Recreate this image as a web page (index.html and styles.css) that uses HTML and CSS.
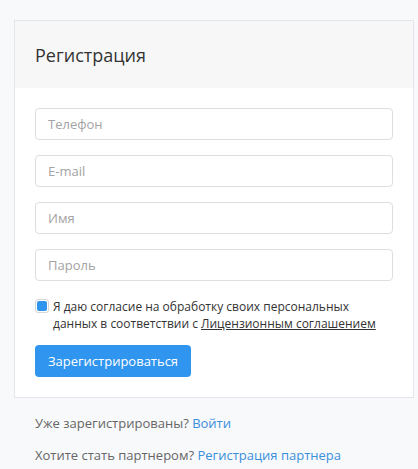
FILE: index.html
```html
<!DOCTYPE html>
<html lang="ru">
<head>
<meta charset="utf-8">
<link rel="stylesheet" href="styles.css">
</head>
<body>
<div class="page">
  <div class="card">
    <div class="card-header"><h1 class="title">Регистрация</h1></div>
    <form class="card-body">
      <input class="field" type="text" placeholder="Телефон">
      <input class="field" type="text" placeholder="E-mail">
      <input class="field" type="text" placeholder="Имя">
      <input class="field" type="password" placeholder="Пароль">
      <label class="agree">
        <span class="check"><span class="check-mark"></span></span>
        <span class="agree-text">Я даю согласие на обработку своих персональных данных в соответствии с <a class="doc-link" href="#">Лицензионным соглашением</a></span>
      </label>
      <button class="btn" type="button">Зарегистрироваться</button>
    </form>
  </div>
  <div class="links">
    <p class="links-row">Уже зарегистрированы? <a class="link" href="#">Войти</a></p>
    <p class="links-row">Хотите стать партнером? <a class="link" href="#">Регистрация партнера</a></p>
  </div>
</div>
</body>
</html>
```
FILE: styles.css
```css
html, body {
  margin: 0;
  padding: 0;
  background: #f8f9fb;
}
body {
  font-family: "Open Sans", "Noto Sans", sans-serif;
  color: #333;
}
.page {
  padding: 20px 0 0 14px;
}
.card {
  width: 398px;
  border: 1px solid #e3e5e8;
  background: #fff;
}
.card-header {
  height: 67px;
  background: #f7f7f7;
  display: flex;
  align-items: center;
  padding: 0 20px;
}
.title {
  margin: 0;
  font-size: 18px;
  font-weight: 400;
  color: #333;
}
.card-body {
  display: flex;
  flex-direction: column;
  padding: 20px 20px;
}
.field {
  box-sizing: border-box;
  height: 32px;
  width: 100%;
  margin: 0 0 15px;
  border: 1px solid #dedede;
  border-radius: 4px;
  padding: 0 12px;
  font-family: inherit;
  font-size: 13px;
  color: #333;
  background: #fff;
  outline: none;
}
.field::placeholder {
  color: #a3a3a3;
}
.agree {
  display: flex;
  align-items: flex-start;
  gap: 4px;
  margin-top: 2px;
  font-size: 12px;
  line-height: 17px;
  color: #333;
}
.check {
  flex: none;
  box-sizing: border-box;
  width: 14px;
  height: 14px;
  margin-top: 1px;
  border: 1px solid #d6d6d6;
  border-radius: 3px;
  background: #fff;
  display: flex;
  align-items: center;
  justify-content: center;
}
.check-mark {
  width: 10px;
  height: 10px;
  border-radius: 2px;
  background: #2f95ee;
}
.doc-link {
  color: #333;
  text-decoration: underline;
}
.btn {
  align-self: flex-start;
  margin-top: 13px;
  height: 32px;
  width: 156px;
  border: none;
  border-radius: 4px;
  background: #2f95ee;
  color: #fff;
  font-family: inherit;
  font-size: 13px;
  cursor: pointer;
}
.links {
  padding: 15px 0 0 21px;
}
.links-row {
  margin: 0 0 12px;
  font-size: 13px;
  line-height: 20px;
  color: #666;
}
.link {
  color: #3a8fdb;
  text-decoration: none;
}
```
